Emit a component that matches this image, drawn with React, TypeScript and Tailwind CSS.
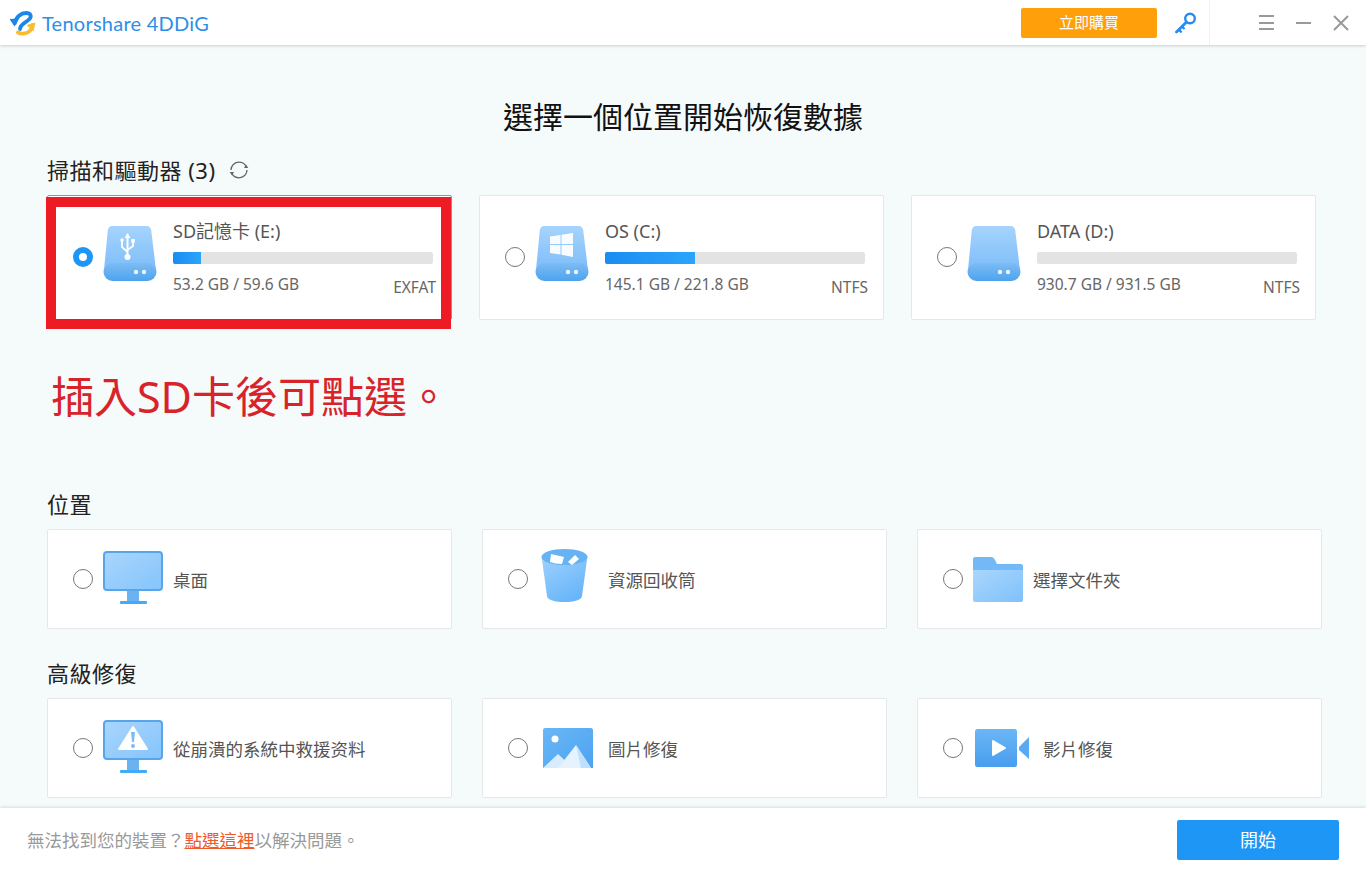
import React from "react";

const Radio = ({ checked = false, className = "" }: { checked?: boolean; className?: string }) => (
  <span
    className={`box-border h-5 w-5 shrink-0 rounded-full ${className} ${
      checked ? "border-[6px] border-[#1e96f5] bg-white" : "border-[1.5px] border-[#777777] bg-white"
    }`}
  />
);

const DriveBase = ({ id, children }: { id: string; children?: React.ReactNode }) => (
  <svg width="54" height="55" viewBox="0 0 54 55" className="block shrink-0">
    <defs>
      <linearGradient id={`${id}a`} x1="0" y1="0" x2="0" y2="1">
        <stop offset="0" stopColor="#a6d4fd" />
        <stop offset="1" stopColor="#7dbdf9" />
      </linearGradient>
      <linearGradient id={`${id}b`} x1="0" y1="0" x2="0" y2="1">
        <stop offset="0" stopColor="#7cbcf4" />
        <stop offset="1" stopColor="#4ea3ee" />
      </linearGradient>
    </defs>
    <path d="M9 0H43.5C46.5 0 48 2 48.300 5L53 44H1L4.700 5C5 2 6.500 0 9 0Z" fill={`url(#${id}a)`} />
    <rect x="0.500" y="37" width="53" height="18" rx="9" fill={`url(#${id}b)`} />
    <circle cx="33" cy="46" r="2.200" fill="#eaf5ff" />
    <circle cx="41" cy="46" r="2.200" fill="#eaf5ff" />
    {children}
  </svg>
);

const UsbMark = () => (
  <g fill="#ffffff" stroke="#ffffff">
    <path d="M24.500 8V32" strokeWidth="2" />
    <path d="M24.500 7L21.500 12H27.500Z" stroke="none" />
    <path d="M19 14V21L24.500 26" fill="none" strokeWidth="1.800" />
    <path d="M30 16V20L24.500 24" fill="none" strokeWidth="1.800" />
    <circle cx="19" cy="14" r="1.800" stroke="none" />
    <rect x="28.300" y="13" width="3.500" height="3.500" stroke="none" />
    <circle cx="24.500" cy="31" r="3" stroke="none" />
  </g>
);

const WinMark = () => (
  <g fill="#ffffff" opacity="0.95">
    <path d="M15 10.500L25.500 9V18H15Z" />
    <path d="M26.500 8.800L38 7V18H26.500Z" />
    <path d="M15 19H25.500V28.500L15 27Z" />
    <path d="M26.500 19H38V31L26.500 28.700Z" />
  </g>
);

const Monitor = ({ id, warn = false }: { id: string; warn?: boolean }) => (
  <svg width="60" height="53" viewBox="0 0 60 53" className="mt-[-3px] block shrink-0">
    <defs>
      <linearGradient id={id} x1="0" y1="0" x2="1" y2="1">
        <stop offset="0" stopColor="#a9d6fd" />
        <stop offset="1" stopColor="#85c4fb" />
      </linearGradient>
    </defs>
    <rect x="1" y="1" width="58" height="38" rx="3" fill={`url(#${id})`} stroke="#57a5ea" strokeWidth="2" />
    <rect x="24" y="40" width="12" height="10" fill="#6bb3f0" />
    <rect x="17" y="50" width="27" height="3" rx="1" fill="#41abf5" />
    {warn && (
      <g>
        <path d="M30 7L44 29H16Z" fill="#ffffff" stroke="#ffffff" strokeWidth="2" strokeLinejoin="round" />
        <path d="M28 12H32L31 22H29Z" fill="#7cbcf6" />
        <circle cx="30" cy="26" r="2" fill="#7cbcf6" />
      </g>
    )}
  </svg>
);

const Bin = () => (
  <svg width="47" height="53" viewBox="0 0 47 53" className="ml-[3px] mt-[-7px] block shrink-0">
    <defs>
      <linearGradient id="binBody" x1="0" y1="0" x2="0.600" y2="1">
        <stop offset="0" stopColor="#9fd2fd" />
        <stop offset="1" stopColor="#68b5f9" />
      </linearGradient>
    </defs>
    <path d="M0.500 7L6 47C6.500 51 14 53 23.500 53C33 53 40.500 51 41 47L46.500 7Z" fill="url(#binBody)" />
    <ellipse cx="23.500" cy="8" rx="23" ry="8" fill="#66b2f2" />
    <path d="M10 5L23 8L21 15C16 15 12 14 9 13Z" fill="#ffffff" />
    <path d="M27 13L34 6L38 10L31 16Z" fill="#ffffff" />
  </svg>
);

const Folder = () => (
  <svg width="50" height="45" viewBox="0 0 50 45" className="block shrink-0">
    <defs>
      <linearGradient id="folderFront" x1="0" y1="0" x2="1" y2="1">
        <stop offset="0" stopColor="#aad6fd" />
        <stop offset="1" stopColor="#7fc1fa" />
      </linearGradient>
    </defs>
    <path d="M2 0H18C20 0 21 1 22 3L24 7H48C49 7 50 8 50 9V16H0V2C0 1 1 0 2 0Z" fill="#74b9f7" />
    <path d="M0 13H50V43C50 44 49 45 48 45H2C1 45 0 44 0 43Z" fill="url(#folderFront)" />
  </svg>
);

const Photo = () => (
  <svg width="50" height="40" viewBox="0 0 50 40" className="ml-[5px] block shrink-0">
    <defs>
      <linearGradient id="photoBg" x1="0" y1="0" x2="1" y2="1">
        <stop offset="0" stopColor="#68b6f6" />
        <stop offset="1" stopColor="#4ea3f0" />
      </linearGradient>
    </defs>
    <path d="M2 0H48C49 0 50 1 50 2V40H0V2C0 1 1 0 2 0Z" fill="url(#photoBg)" />
    <circle cx="12" cy="11" r="3.500" fill="#ffffff" />
    <path d="M0 40L15 26L30 40Z" fill="#d8ecfe" />
    <path d="M15 40L33 17L48 40Z" fill="#e6f3ff" />
    <path d="M33 17L38 40H48Z" fill="#bfe0fd" />
  </svg>
);

const Video = () => (
  <svg width="54" height="38" viewBox="0 0 54 38" className="ml-[2px] block shrink-0">
    <defs>
      <linearGradient id="videoBg" x1="0" y1="0" x2="0" y2="1">
        <stop offset="0" stopColor="#6ab7f7" />
        <stop offset="1" stopColor="#489ded" />
      </linearGradient>
    </defs>
    <rect width="42" height="38" rx="2.500" fill="url(#videoBg)" />
    <path d="M18 12L30 19L18 26Z" fill="#ffffff" stroke="#ffffff" strokeWidth="2" strokeLinejoin="round" />
    <path d="M44 18L54 8V30L44 21Z" fill="#5aaaf2" />
  </svg>
);

const Logo = () => (
  <svg width="27" height="26" viewBox="0 0 27 26" className="shrink-0">
    <path d="M6 13C7 7 12 3 17 3C21.500 3 23 6 20.500 9C17.500 12.500 11.500 13.500 11 19" fill="none" stroke="#1b87e6" strokeWidth="3.800" strokeLinecap="round" />
    <path d="M0.500 9L10 8.500L5.500 16.500Z" fill="#1b87e6" />
    <path d="M9 22.500C12.500 24.500 19 24 22 19.500C23 18 23.500 17 23 15" fill="none" stroke="#fbbb2f" strokeWidth="3.800" strokeLinecap="round" />
    <path d="M17.500 15L26.500 12.500L24.500 21.500Z" fill="#fbbb2f" />
  </svg>
);

const KeyIcon = () => (
  <svg width="22" height="22" viewBox="0 0 22 22" className="block shrink-0">
    <circle cx="15" cy="6.500" r="4.800" fill="none" stroke="#2a8bee" strokeWidth="2.400" />
    <path d="M11.500 10L1.500 20" stroke="#2a8bee" strokeWidth="2.800" strokeLinecap="round" />
    <path d="M4 17.500L6.500 20.500M7 14.500L9.500 17" stroke="#2a8bee" strokeWidth="2.400" />
  </svg>
);

const RefreshIcon = () => (
  <svg width="20" height="20" viewBox="0 0 20 20" className="block shrink-0">
    <path d="M2 10C2 5.500 5.500 2.200 10 2.200C12.800 2.200 15.300 3.500 16.800 5.800" fill="none" stroke="#666666" strokeWidth="1.300" />
    <path d="M18 10C18 14.500 14.500 17.800 10 17.800C7.200 17.800 4.700 16.500 3.200 14.200" fill="none" stroke="#666666" strokeWidth="1.300" />
    <path d="M15 8L19.300 8L17 4.500Z" fill="#666666" />
    <path d="M5 12L0.700 12L3 15.500Z" fill="#666666" />
  </svg>
);

const drives = [
  { id: "e", name: "SD記憶卡 (E:)", size: "53.2 GB / 59.6 GB", fs: "EXFAT", used: 28, mark: <UsbMark />, selected: true },
  { id: "c", name: "OS (C:)", size: "145.1 GB / 221.8 GB", fs: "NTFS", used: 90, mark: <WinMark />, selected: false },
  { id: "d", name: "DATA (D:)", size: "930.7 GB / 931.5 GB", fs: "NTFS", used: 0, mark: null, selected: false },
];

const DriveCard = ({ drive }: { drive: (typeof drives)[number] }) => (
  <div
    className={`relative flex h-[125px] w-[405px] shrink-0 items-center rounded-[2px] border bg-white pl-[25px] ${
      drive.selected ? "border-[#4ea6e8]" : "border-[#e4e8ea]"
    }`}
  >
    <Radio checked={drive.selected} className="mt-[-1px]" />
    <div className="ml-[10px] mt-[-8px]">
      <DriveBase id={drive.id}>{drive.mark}</DriveBase>
    </div>
    <div className="ml-4 flex w-[260px] flex-col">
      <span className="mt-[-2px] text-[18px] leading-[24px] text-[#555555]">{drive.name}</span>
      <div className="mt-[9px] h-3 w-[260px] overflow-hidden rounded-[2px] bg-[#e3e3e3]">
        <div
          className="h-full bg-gradient-to-r from-[#1b8cf2] to-[#2aa5fb]"
          style={{ width: `${drive.used}px` }}
        />
      </div>
      <span className="mt-[10px] text-[15.5px] leading-[20px] text-[#666666]">{drive.size}</span>
    </div>
    <span className="absolute right-[15px] top-[81px] text-[15.5px] leading-[20px] text-[#666666]">{drive.fs}</span>
    {drive.selected && (
      <div className="pointer-events-none absolute left-[-2px] top-[1px] h-[132px] w-[405px] border-[10px] border-[#ed1c24]" />
    )}
  </div>
);

const OptionCard = ({ icon, label, slot }: { icon: React.ReactNode; label: string; slot: string }) => (
  <div className="flex h-[100px] w-[405px] shrink-0 items-center rounded-[2px] border border-[#e4e8ea] bg-white pl-[25px]">
    <Radio />
    <div className={`ml-[10px] flex items-center ${slot}`}>{icon}</div>
    <span className="mt-[1px] text-[17.5px] leading-[24px] text-[#555555]">{label}</span>
  </div>
);

const SectionLabel = ({ children, className }: { children: React.ReactNode; className: string }) => (
  <div className={`flex h-[30px] items-center pb-[2px] text-[22px] leading-[28px] tracking-[0.5px] text-[#222222] ${className}`}>
    {children}
  </div>
);

export default function App() {
  return (
    <div className="flex h-[872px] w-full flex-col overflow-hidden bg-[#f5fafb] font-['Noto_Sans','Noto_Sans_CJK_TC',sans-serif]">
      <header className="z-10 flex h-[45px] shrink-0 items-center bg-white pl-[9px] shadow-[0_1px_3px_rgba(0,0,0,0.18)]">
        <Logo />
        <span className="ml-[6px] font-['Lato','Noto_Sans',sans-serif] text-[20px] tracking-[0.25px] text-[#2b8fe8]">
          Tenorshare 4DDiG
        </span>
        <button className="ml-auto flex h-[30px] w-[136px] items-center justify-center rounded-[2px] bg-[#ff9f0a] text-[15px] text-white">
          立即購買
        </button>
        <div className="ml-[18px]">
          <KeyIcon />
        </div>
        <div className="ml-3 h-full w-px bg-[#f0f1f2]" />
        <div className="ml-[49px] flex h-[15px] w-[15px] flex-col justify-between">
          <span className="h-[2px] w-[15px] bg-[#999999]" />
          <span className="h-[2px] w-[15px] bg-[#999999]" />
          <span className="h-[2px] w-[15px] bg-[#999999]" />
        </div>
        <span className="ml-[22px] h-[2px] w-[15px] bg-[#999999]" />
        <svg width="16" height="16" viewBox="0 0 16 16" className="ml-[22px] mr-[17px] shrink-0">
          <path d="M1 1L15 15M15 1L1 15" stroke="#999999" strokeWidth="2" />
        </svg>
      </header>

      <main className="flex flex-1 flex-col px-[47px]">
        <h1 className="mt-[52px] h-10 text-center text-[30px] font-normal leading-[40px] text-[#111111]">
          選擇一個位置開始恢復數據
        </h1>
        <SectionLabel className="mt-[19px]">
          掃描和驅動器 (3)
          <span className="ml-[13px]">
            <RefreshIcon />
          </span>
        </SectionLabel>
        <div className="mt-[9px] flex gap-[27px]">
          {drives.map((d) => (
            <DriveCard key={d.id} drive={d} />
          ))}
        </div>
        <div className="mt-[52px] h-[50px] pl-1 text-[43px] leading-[50px] text-[#d8232a]">插入SD卡後可點選。</div>
        <SectionLabel className="mt-[68px]">位置</SectionLabel>
        <div className="mt-[9px] flex gap-[30px]">
          <OptionCard slot="w-[70px]" icon={<Monitor id="mon1" />} label="桌面" />
          <OptionCard slot="w-[70px]" icon={<Bin />} label="資源回收筒" />
          <OptionCard slot="w-[60px]" icon={<Folder />} label="選擇文件夾" />
        </div>
        <SectionLabel className="mt-[30px]">高級修復</SectionLabel>
        <div className="mt-[9px] flex gap-[30px]">
          <OptionCard slot="w-[70px]" icon={<Monitor id="mon2" warn />} label="從崩潰的系統中救援资料" />
          <OptionCard slot="w-[70px]" icon={<Photo />} label="圖片修復" />
          <OptionCard slot="w-[70px]" icon={<Video />} label="影片修復" />
        </div>
      </main>

      <footer className="z-10 flex h-[64px] shrink-0 items-center bg-white px-[27px] shadow-[0_-1px_3px_rgba(0,0,0,0.12)]">
        <span className="text-[17.5px] text-[#999999]">
          無法找到您的裝置？
          <span className="text-[#f0592a] underline">點選這裡</span>
          以解決問題。
        </span>
        <button className="ml-auto flex h-10 w-[162px] items-center justify-center rounded-[2px] bg-[#1e96f5] text-[18px] text-white">
          開始
        </button>
      </footer>
    </div>
  );
}
